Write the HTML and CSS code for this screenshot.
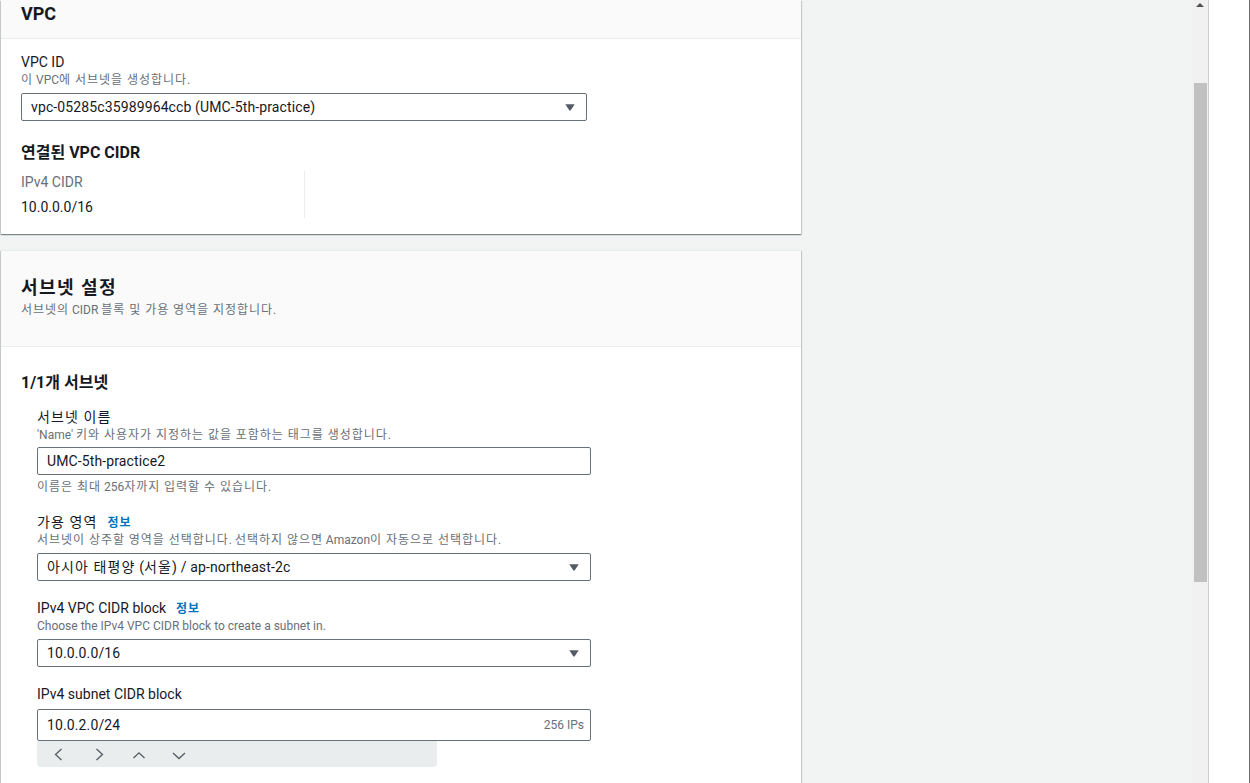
FILE: index.html
```html
<!DOCTYPE html>
<html lang="ko">
<head>
<meta charset="utf-8">
<title>서브넷 생성</title>
<link rel="stylesheet" href="styles.css">
</head>
<body>
<div class="screen">
  <main class="content">
    <section class="card card-vpc">
      <header class="card-header">
        <h2 class="card-title">VPC</h2>
      </header>
      <div class="card-body body-vpc">
        <div class="field">
          <div class="field-label">VPC ID</div>
          <div class="field-desc"><span class="ko">이</span> VPC<span class="ko">에 서브넷을 생성합니다</span>.</div>
          <div class="select select-wide">
            <span class="select-value">vpc-05285c35989964ccb (UMC-5th-practice)</span>
            <svg class="caret" width="10" height="7" viewBox="0 0 10 7"><path d="M0.3 0.2 H9.7 L5.6 6.6 H4.4 Z" fill="#545b64"/></svg>
          </div>
        </div>
        <h3 class="section-title cidr-title">연결된 VPC CIDR</h3>
        <div class="kv">
          <div class="kv-col">
            <div class="kv-key">IPv4 CIDR</div>
            <div class="kv-val">10.0.0.0/16</div>
          </div>
        </div>
      </div>
    </section>

    <section class="card card-subnet">
      <header class="card-header header-subnet">
        <h2 class="card-title"><span class="ko">서브넷 설정</span></h2>
        <div class="header-desc"><span class="ko">서브넷의</span> CIDR <span class="ko">블록 및 가용 영역을 지정합니다</span>.</div>
      </header>
      <div class="card-body body-subnet">
        <h3 class="section-title">1/1개 서브넷</h3>
        <div class="subnet-fields">
          <div class="field field-first">
            <div class="field-label"><span class="ko">서브넷 이름</span></div>
            <div class="field-desc">'Name' <span class="ko">키와 사용자가 지정하는 값을 포함하는 태그를 생성합니다</span>.</div>
            <div class="input input-name"><span class="input-value">UMC-5th-practice2</span></div>
            <div class="field-hint"><span class="ko">이름은 최대</span> 256<span class="ko">자까지 입력할 수 있습니다</span>.</div>
          </div>
          <div class="field">
            <div class="field-label"><span class="ko">가용 영역</span><a class="info ko">정보</a></div>
            <div class="field-desc"><span class="ko">서브넷이 상주할 영역을 선택합니다</span>. <span class="ko">선택하지 않으면</span> Amazon<span class="ko">이 자동으로 선택합니다</span>.</div>
            <div class="select">
              <span class="select-value"><span class="ko">아시아 태평양</span> (<span class="ko">서울</span>) / ap-northeast-2c</span>
              <svg class="caret" width="10" height="7" viewBox="0 0 10 7"><path d="M0.3 0.2 H9.7 L5.6 6.6 H4.4 Z" fill="#545b64"/></svg>
            </div>
          </div>
          <div class="field">
            <div class="field-label">IPv4 VPC CIDR block<a class="info ko">정보</a></div>
            <div class="field-desc">Choose the IPv4 VPC CIDR block to create a subnet in.</div>
            <div class="select">
              <span class="select-value">10.0.0.0/16</span>
              <svg class="caret" width="10" height="7" viewBox="0 0 10 7"><path d="M0.3 0.2 H9.7 L5.6 6.6 H4.4 Z" fill="#545b64"/></svg>
            </div>
          </div>
          <div class="field">
            <div class="field-label">IPv4 subnet CIDR block</div>
            <div class="autosuggest">
              <div class="input input-cidr">
                <span class="input-value">10.0.2.0/24</span>
                <span class="input-suffix">256 IPs</span>
              </div>
              <div class="stepper">
                <span class="step-btn"><svg width="16" height="16" viewBox="0 0 16 16"><polyline points="10.5,3 4.5,8.5 10.5,14" fill="none" stroke="#545b64" stroke-width="1.3"/></svg></span>
                <span class="step-btn"><svg width="16" height="16" viewBox="0 0 16 16"><polyline points="5.5,3 11.5,8.5 5.5,14" fill="none" stroke="#545b64" stroke-width="1.3"/></svg></span>
                <span class="step-btn"><svg width="16" height="16" viewBox="0 0 16 16"><polyline points="2.5,12 8,6.8 13.5,12" fill="none" stroke="#545b64" stroke-width="1.3"/></svg></span>
                <span class="step-btn"><svg width="16" height="16" viewBox="0 0 16 16"><polyline points="2,7 8,12.5 14,7" fill="none" stroke="#545b64" stroke-width="1.3"/></svg></span>
              </div>
            </div>
          </div>
        </div>
      </div>
    </section>
  </main>

  <div class="scrollbar">
    <div class="sb-up"></div>
    <div class="sb-thumb"></div>
  </div>
  <aside class="side"></aside>
</div>
</body>
</html>
```

FILE: styles.css
```css
* { box-sizing: border-box; }

html, body {
  margin: 0;
  padding: 0;
}

body {
  width: 1250px;
  height: 783px;
  overflow: hidden;
  background: #f2f3f3;
  font-family: Roboto, "Noto Sans CJK KR", sans-serif;
  font-size: 14px;
  line-height: 20px;
  color: #16191f;
}

/* Hangul runs: widen to the reference's full-width Korean face */
.ko {
  letter-spacing: 0.08em;
}

.screen {
  display: flex;
  height: 783px;
}

.content {
  flex: 0 0 1192px;
  padding-left: 1px;
  overflow: hidden;
}

.card {
  width: 800px;
  background: #ffffff;
  box-shadow: 0 1px 1px 0 rgba(0, 28, 36, 0.3),
              1px 1px 1px 0 rgba(0, 28, 36, 0.15),
              -1px 1px 1px 0 rgba(0, 28, 36, 0.15);
}

.card-subnet {
  margin-top: 16px;
  border-top: 1px solid #eaeded;
}

.card-header {
  background: #fafafa;
  border-bottom: 1px solid #eaeded;
  padding: 0 20px;
}

.card-vpc .card-header {
  height: 39px;
  padding-top: 2px;
}

.card-title {
  margin: 0;
  font-size: 18px;
  line-height: 24px;
  font-weight: 700;
}

.header-subnet {
  padding-top: 25px;
  padding-bottom: 28px;
}

.header-desc {
  margin-top: 2px;
  font-size: 12px;
  line-height: 16px;
  color: #687078;
}

.card-body {
  padding: 0 20px;
}

.body-vpc {
  padding-top: 13px;
  padding-bottom: 16px;
}

.body-subnet {
  padding-top: 25px;
  padding-bottom: 40px;
}

.section-title {
  margin: 0;
  font-size: 16px;
  line-height: 22px;
  font-weight: 700;
}

.cidr-title {
  margin-top: 21px;
}

.field-label {
  font-size: 14px;
  line-height: 20px;
  height: 20px;
}

.info {
  margin-left: 10px;
  font-size: 12px;
  line-height: 16px;
  font-weight: 700;
  color: #0073bb;
}

.field-desc,
.field-hint {
  font-size: 12px;
  line-height: 16px;
  color: #687078;
}

.field-hint {
  margin-top: 4px;
}

.select,
.input {
  display: flex;
  align-items: center;
  justify-content: space-between;
  height: 28px;
  width: 554px;
  margin-top: 5px;
  padding: 0 11px 0 9px;
  border: 1px solid #687078;
  border-radius: 2px;
  background: #ffffff;
  font-size: 14px;
  line-height: 26px;
  color: #16191f;
}

.select-value,
.input-value {
  letter-spacing: 0.12px;
}

.select-value .ko {
  letter-spacing: 0.08em;
}

.select-wide {
  width: 566px;
}

.caret {
  display: block;
  flex: 0 0 auto;
}

.kv {
  margin-top: 7px;
  display: flex;
}

.kv-col {
  width: 284px;
  height: 47px;
  padding-top: 1px;
  border-right: 1px solid #eaeded;
}

.kv-key {
  color: #687078;
}

.kv-val {
  margin-top: 5px;
}

.subnet-fields {
  padding-left: 16px;
}

.field + .field {
  margin-top: 17px;
}

.field-first {
  margin-top: 13px;
}

.input-name {
  margin-top: 4px;
}

.autosuggest {
  width: 554px;
  margin-top: 5px;
}

.input-cidr {
  margin-top: 0;
  height: 32px;
  line-height: 30px;
  padding-right: 6px;
}

.input-suffix {
  font-size: 12px;
  color: #687078;
}

.stepper {
  width: 400px;
  height: 26px;
  background: #eaeded;
  border-radius: 0 0 4px 4px;
  display: flex;
  align-items: center;
  gap: 20px;
  padding-left: 12px;
}

.step-btn {
  width: 20px;
  height: 16px;
  display: flex;
  justify-content: center;
}

.step-btn svg {
  display: block;
}

.scrollbar {
  flex: 0 0 16px;
  background: #f1f1f1;
  display: flex;
  flex-direction: column;
  align-items: center;
}

.sb-up {
  margin-top: 3px;
  width: 0;
  height: 0;
  border-left: 4px solid transparent;
  border-right: 4px solid transparent;
  border-bottom: 4px solid #505050;
}

.sb-thumb {
  margin-top: 76px;
  align-self: flex-start;
  margin-left: 2px;
  width: 13px;
  height: 499px;
  background: #c1c1c1;
}

.side {
  flex: 0 0 42px;
  background: #ffffff;
  border-left: 1px solid #cdcdcd;
  border-right: 1px solid #6d6d6d;
}
```
